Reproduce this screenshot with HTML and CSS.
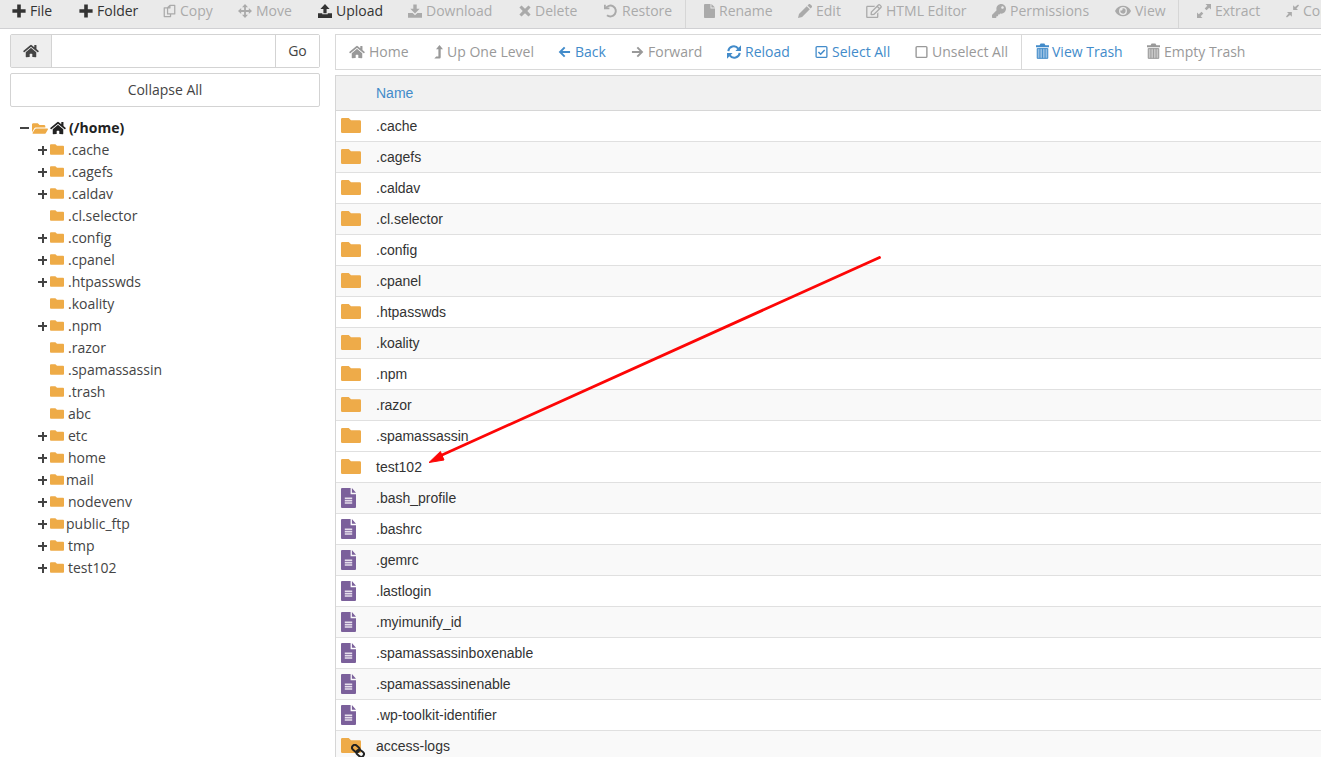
FILE: index.html
```
<!DOCTYPE html>
<html lang="en">
<head>
<meta charset="utf-8">
<title>File Manager</title>
<link rel="stylesheet" href="styles.css">
</head>
<body>
<svg class="sprite" aria-hidden="true">
  <symbol id="home" viewBox="0 0 576 512"><path d="M280.37 148.26L96 300.11V464a16 16 0 0 0 16 16l112.06-.29a16 16 0 0 0 15.92-16V368a16 16 0 0 1 16-16h64a16 16 0 0 1 16 16v95.64a16 16 0 0 0 16 16.05L464 480a16 16 0 0 0 16-16V300L295.67 148.26a12.19 12.19 0 0 0-15.3 0zM571.6 251.47L488 182.56V44.05a12 12 0 0 0-12-12h-56a12 12 0 0 0-12 12v72.61L318.47 43a48 48 0 0 0-61 0L4.34 251.47a12 12 0 0 0-1.6 16.9l25.5 31A12 12 0 0 0 45.15 301l235.22-193.74a12.19 12.19 0 0 1 15.3 0L530.9 301a12 12 0 0 0 16.9-1.6l25.5-31a12 12 0 0 0-1.7-16.93z"/></symbol>
  <symbol id="plus" viewBox="0 0 14 14"><path d="M5.2 .6h3.600v4.600h4.800v3.600H8.800v4.600H5.200V8.800H.4V5.200h4.800z"/></symbol>
  <symbol id="copy" viewBox="0 0 14 16"><g fill="none" stroke="currentColor" stroke-width="1.4" stroke-linejoin="round"><path d="M7.500 1.500H13v9.800H4.800V4.300zM7.500 1.500v3H4.800M4.800 4.300H1v10h7.200v-3"/></g></symbol>
  <symbol id="move" viewBox="0 0 14 14"><path d="M7 0l3 3.200H7.900v2.900h2.900V4L14 7l-3.200 3V7.900H7.900v2.900H10L7 14l-3-3.200h2.100V7.900H3.200V10L0 7l3.200-3v2.100h2.900V3.200H4z"/></symbol>
  <symbol id="upload" viewBox="0 0 14 14"><path d="M7 0l4.600 4.900H8.600v4.300H5.400V4.900H2.400z"/><path d="M0 9.300h4.300v1h5.400v-1H14V14H0z"/></symbol>
  <symbol id="download" viewBox="0 0 14 14"><path d="M5.300.5h3.400v4.300h3L7 9.600 2.300 4.800h3z"/><path d="M0 9h4.600L7 11.200 9.400 9H14v4.800H0z"/></symbol>
  <symbol id="times" viewBox="0 0 12 12"><path d="M2.500.4L6 3.700 9.500.4l2.100 2.200L8.300 6l3.300 3.400-2.100 2.200L6 8.300l-3.500 3.300L.4 9.400 3.700 6 .4 2.600z"/></symbol>
  <symbol id="undo" viewBox="0 0 14 14"><path d="M0 .8h1.800v2.700h3.600v1.800H0z"/><path d="M1.600 4.600A5.400 5.400 0 1 1 3 11.200" fill="none" stroke="currentColor" stroke-width="2"/></symbol>
  <symbol id="file" viewBox="0 0 11 14"><path d="M1 0h5.500v4.500H11v8.700a.8.8 0 0 1-.8.800H.8a.8.800 0 0 1-.8-.8V1a1 1 0 0 1 1-1zM7.400 0L11 3.600H7.400z"/></symbol>
  <symbol id="pencil" viewBox="0 0 14 14"><path d="M8.700 2.200l3.100 3.100L4.100 13 0 14l1-4.100zM9.500 1.400L10.500.4a1.300 1.300 0 0 1 1.900 0l1.200 1.200a1.300 1.300 0 0 1 0 1.900l-1 1z"/></symbol>
  <symbol id="edit" viewBox="0 0 576 512"><path d="M402.3 344.9l32-32c5-5 13.7-1.5 13.7 5.7V464c0 26.5-21.5 48-48 48H48c-26.5 0-48-21.5-48-48V112c0-26.5 21.5-48 48-48h273.5c7.1 0 10.7 8.6 5.700 13.700l-32 32c-1.5 1.500-3.500 2.300-5.700 2.300H48v352h352V350.500c0-2.100.8-4.100 2.300-5.600zm156.600-201.800L296.300 405.700l-90.400 10c-26.200 2.900-48.500-19.200-45.600-45.600l10-90.400L432.900 17.100c22.900-22.900 59.900-22.900 82.700 0l43.200 43.200c22.900 22.900 22.900 60 .1 82.800zM460.100 174L402 115.900 216.200 301.800l-7.300 65.300 65.300-7.300L460.100 174zm64.800-79.700l-43.200-43.200c-4.100-4.100-10.800-4.100-14.800 0L436 82l58.100 58.100 30.900-30.900c4-4.200 4-10.800-.1-14.900z"/></symbol>
  <symbol id="key" viewBox="0 0 512 512"><path d="M512 176C512 273.200 433.200 352 336 352c-11.220 0-22.190-1.060-32.830-3.070l-24 27A24 24 0 0 1 261.220 384H224v40c0 13.250-10.750 24-24 24h-40v40c0 13.250-10.750 24-24 24H24c-13.250 0-24-10.750-24-24v-78.060c0-6.360 2.530-12.470 7.030-16.970l161.800-161.800C163.100 213.800 160 195.270 160 176 160 78.800 238.800 0 336 0 433.500 0 512 78.500 512 176zM336 128c0 26.510 21.490 48 48 48s48-21.490 48-48-21.490-48-48-48-48 21.490-48 48z"/></symbol>
  <symbol id="eye" viewBox="0 0 576 512"><path d="M572.520 241.400C518.290 135.590 410.930 64 288 64S57.680 135.640 3.480 241.410a32.350 32.350 0 0 0 0 29.190C57.710 376.410 165.070 448 288 448s230.320-71.640 284.520-177.410a32.350 32.350 0 0 0 0-29.190zM288 400a144 144 0 1 1 144-144 143.930 143.930 0 0 1-144 144zm0-240a95.310 95.310 0 0 0-25.310 3.790 47.850 47.850 0 0 1-66.900 66.900A95.780 95.780 0 1 0 288 160z"/></symbol>
  <symbol id="expand" viewBox="0 0 14 14"><path d="M8.500 0H14v5.500l-1.800-1.800-2.700 2.600-1.800-1.800 2.600-2.700zM5.500 14H0V8.500l1.800 1.800 2.700-2.600 1.800 1.800-2.600 2.700z"/></symbol>
  <symbol id="compress" viewBox="0 0 14 14"><path d="M13 0l1 1-2.800 3.200L13 6H7.700V.8l1.900 1.900zM1 14l-1-1 2.800-3.200L1 8h5.300v5.200l-1.900-1.900z"/></symbol>
  <symbol id="levelup" viewBox="0 0 9 14"><path d="M5.500 0L9 4.300H6.700v8a1.200 1.200 0 0 1-1.200 1.200H.3L2.200 11.400h2.200V4.300H2z"/></symbol>
  <symbol id="left" viewBox="0 0 14 14"><path d="M7.200 2L2.200 7l5 5M2.400 7H13" fill="none" stroke="currentColor" stroke-width="2.100"/></symbol>
  <symbol id="right" viewBox="0 0 14 14"><path d="M6.800 2l5 5-5 5M11.600 7H1" fill="none" stroke="currentColor" stroke-width="2.100"/></symbol>
  <symbol id="sync" viewBox="0 0 14 14"><path d="M1.300 6.200A5.500 5.500 0 0 1 11.200 3.600M12.700 7.800A5.500 5.500 0 0 1 2.800 10.400" fill="none" stroke="currentColor" stroke-width="2"/><path d="M14 .3v5.600H8.400zM0 13.700V8.100h5.600z"/></symbol>
  <symbol id="checked" viewBox="0 0 14 14"><g fill="none" stroke="currentColor"><rect x="1.200" y="1.200" width="11.600" height="11.600" rx="1" stroke-width="1.400"/><path d="M3.700 7l2.400 2.400 4.300-4.500" stroke-width="1.700"/></g></symbol>
  <symbol id="unchecked" viewBox="0 0 14 14"><rect x="1.200" y="1.200" width="11.600" height="11.600" rx="1" fill="none" stroke="currentColor" stroke-width="1.500"/></symbol>
  <symbol id="trash" viewBox="0 0 13 16"><path d="M0 2.200h3.600L4.600.4h3.800l1 1.800H13v2H0z"/><path d="M.8 5.200h11.400v9.700a.9.900 0 0 1-.9.900H1.700a.9.900 0 0 1-.9-.9z" opacity=".55"/><path d="M1.300 5.600v9.700h10.400V5.600zM3.900 5.600v9.700M6.500 5.600v9.700M9.100 5.600v9.700" fill="none" stroke="currentColor" stroke-width=".9"/></symbol>
  <symbol id="folder" viewBox="0 0 20 15"><path d="M1.300 0h6.400l2.300 2.200h8.700A1.300 1.300 0 0 1 20 3.500v10.200a1.300 1.300 0 0 1-1.300 1.300H1.300A1.300 1.300 0 0 1 0 13.700V1.300A1.300 1.300 0 0 1 1.300 0z"/></symbol>
  <symbol id="folderopen" viewBox="0 64 576 384"><path d="M572.700 292.100L500.270 416.250A64 64 0 0 1 445 448H45c-18.500 0-30-20.100-20.700-36.100l72.400-124.150A64 64 0 0 1 152 256h400c18.500 0 30 20.100 20.700 36.100zM152 224h328v-48c0-26.500-21.500-48-48-48H272l-64-64H48C21.500 64 0 85.500 0 112v278l69-118.400C86.200 242.250 118 224 152 224z"/></symbol>
  <symbol id="doc" viewBox="0 0 15 20"><path d="M1 0h8.600v6.200H15V19a1 1 0 0 1-1 1H1a1 1 0 0 1-1-1V1a1 1 0 0 1 1-1zM10.900 0L15 4.700h-4.100z"/><path d="M3.800 10.200h7.400M3.800 12.600h7.400M3.800 15h7.400" stroke="#e6deec" stroke-width="1.600"/></symbol>
  <symbol id="link" viewBox="0 0 14 14"><g fill="none" stroke="currentColor" stroke-width="2"><rect x="0.800" y="1.800" width="8" height="5.400" rx="2.700" transform="rotate(40 4.800 4.500)"/><rect x="5.200" y="6.600" width="8" height="5.400" rx="2.700" transform="rotate(40 9.200 9.300)"/></g></symbol>
</svg>

<nav class="toolbar">
  <a class="tool on"><svg class="i14"><use href="#plus"/></svg><span>File</span></a>
  <a class="tool on"><svg class="i14"><use href="#plus"/></svg><span>Folder</span></a>
  <a class="tool"><svg class="i13"><use href="#copy"/></svg><span>Copy</span></a>
  <a class="tool"><svg class="i14"><use href="#move"/></svg><span>Move</span></a>
  <a class="tool on"><svg class="i14"><use href="#upload"/></svg><span>Upload</span></a>
  <a class="tool"><svg class="i14"><use href="#download"/></svg><span>Download</span></a>
  <a class="tool"><svg class="i12"><use href="#times"/></svg><span>Delete</span></a>
  <a class="tool"><svg class="i14"><use href="#undo"/></svg><span>Restore</span></a>
  <a class="tool split"><svg class="i11"><use href="#file"/></svg><span>Rename</span></a>
  <a class="tool"><svg class="i14"><use href="#pencil"/></svg><span>Edit</span></a>
  <a class="tool"><svg class="i16"><use href="#edit"/></svg><span>HTML Editor</span></a>
  <a class="tool"><svg class="i14"><use href="#key"/></svg><span>Permissions</span></a>
  <a class="tool"><svg class="i16"><use href="#eye"/></svg><span>View</span></a>
  <a class="tool split"><svg class="i14"><use href="#expand"/></svg><span>Extract</span></a>
  <a class="tool"><svg class="i13"><use href="#compress"/></svg><span>Compress</span></a>
</nav>

<div class="page">
  <aside class="side">
    <div class="path"><span class="path-home"><svg class="i16"><use href="#home"/></svg></span><input class="path-input" aria-label="Path"><button class="path-go">Go</button></div>
    <button class="collapse">Collapse All</button>
    <div class="tree">
      <div class="root"><b class="minus"></b><svg class="open"><use href="#folderopen"/></svg><svg class="i16"><use href="#home"/></svg><span>(/home)</span></div>
      <div class="node"><b class="more"></b><svg><use href="#folder"/></svg><span>.cache</span></div>
      <div class="node"><b class="more"></b><svg><use href="#folder"/></svg><span>.cagefs</span></div>
      <div class="node"><b class="more"></b><svg><use href="#folder"/></svg><span>.caldav</span></div>
      <div class="node"><b></b><svg><use href="#folder"/></svg><span>.cl.selector</span></div>
      <div class="node"><b class="more"></b><svg><use href="#folder"/></svg><span>.config</span></div>
      <div class="node"><b class="more"></b><svg><use href="#folder"/></svg><span>.cpanel</span></div>
      <div class="node"><b class="more"></b><svg><use href="#folder"/></svg><span>.htpasswds</span></div>
      <div class="node"><b></b><svg><use href="#folder"/></svg><span>.koality</span></div>
      <div class="node"><b class="more"></b><svg><use href="#folder"/></svg><span>.npm</span></div>
      <div class="node"><b></b><svg><use href="#folder"/></svg><span>.razor</span></div>
      <div class="node"><b></b><svg><use href="#folder"/></svg><span>.spamassassin</span></div>
      <div class="node"><b></b><svg><use href="#folder"/></svg><span>.trash</span></div>
      <div class="node"><b></b><svg><use href="#folder"/></svg><span>abc</span></div>
      <div class="node"><b class="more"></b><svg><use href="#folder"/></svg><span>etc</span></div>
      <div class="node"><b class="more"></b><svg><use href="#folder"/></svg><span>home</span></div>
      <div class="node tight"><b class="more"></b><svg><use href="#folder"/></svg><span>mail</span></div>
      <div class="node"><b class="more"></b><svg><use href="#folder"/></svg><span>nodevenv</span></div>
      <div class="node tight"><b class="more"></b><svg><use href="#folder"/></svg><span>public_ftp</span></div>
      <div class="node"><b class="more"></b><svg><use href="#folder"/></svg><span>tmp</span></div>
      <div class="node"><b class="more"></b><svg><use href="#folder"/></svg><span>test102</span></div>
    </div>
  </aside>

  <main class="main">
    <nav class="actions">
      <a class="act"><svg class="i16"><use href="#home"/></svg><span>Home</span></a>
      <a class="act"><svg class="i9"><use href="#levelup"/></svg><span>Up One Level</span></a>
      <a class="act blue"><svg class="i13"><use href="#left"/></svg><span>Back</span></a>
      <a class="act"><svg class="i13"><use href="#right"/></svg><span>Forward</span></a>
      <a class="act blue"><svg class="i14"><use href="#sync"/></svg><span>Reload</span></a>
      <a class="act blue"><svg class="i13"><use href="#checked"/></svg><span>Select All</span></a>
      <a class="act"><svg class="i13"><use href="#unchecked"/></svg><span>Unselect All</span></a>
      <a class="act blue split"><svg class="bin"><use href="#trash"/></svg><span>View Trash</span></a>
      <a class="act"><svg class="bin"><use href="#trash"/></svg><span>Empty Trash</span></a>
    </nav>
    <div class="list">
      <div class="head">Name</div>
      <div class="row"><svg class="dir"><use href="#folder"/></svg><span>.cache</span></div>
      <div class="row alt"><svg class="dir"><use href="#folder"/></svg><span>.cagefs</span></div>
      <div class="row"><svg class="dir"><use href="#folder"/></svg><span>.caldav</span></div>
      <div class="row alt"><svg class="dir"><use href="#folder"/></svg><span>.cl.selector</span></div>
      <div class="row"><svg class="dir"><use href="#folder"/></svg><span>.config</span></div>
      <div class="row alt"><svg class="dir"><use href="#folder"/></svg><span>.cpanel</span></div>
      <div class="row"><svg class="dir"><use href="#folder"/></svg><span>.htpasswds</span></div>
      <div class="row alt"><svg class="dir"><use href="#folder"/></svg><span>.koality</span></div>
      <div class="row"><svg class="dir"><use href="#folder"/></svg><span>.npm</span></div>
      <div class="row alt"><svg class="dir"><use href="#folder"/></svg><span>.razor</span></div>
      <div class="row"><svg class="dir"><use href="#folder"/></svg><span>.spamassassin</span></div>
      <div class="row"><svg class="dir"><use href="#folder"/></svg><span>test102</span></div>
      <div class="row alt"><svg class="doc"><use href="#doc"/></svg><span>.bash_profile</span></div>
      <div class="row"><svg class="doc"><use href="#doc"/></svg><span>.bashrc</span></div>
      <div class="row alt"><svg class="doc"><use href="#doc"/></svg><span>.gemrc</span></div>
      <div class="row"><svg class="doc"><use href="#doc"/></svg><span>.lastlogin</span></div>
      <div class="row alt"><svg class="doc"><use href="#doc"/></svg><span>.myimunify_id</span></div>
      <div class="row"><svg class="doc"><use href="#doc"/></svg><span>.spamassassinboxenable</span></div>
      <div class="row alt"><svg class="doc"><use href="#doc"/></svg><span>.spamassassinenable</span></div>
      <div class="row"><svg class="doc"><use href="#doc"/></svg><span>.wp-toolkit-identifier</span></div>
      <div class="row alt"><svg class="dir"><use href="#folder"/></svg><svg class="badge"><use href="#link"/></svg><span>access-logs</span></div>
    </div>
  </main>
</div>
<svg class="arrow" viewBox="0 0 460 212"><path d="M451.500 5.500L14 203" stroke="#fd0606" stroke-width="2.800" stroke-linecap="round"/><path d="M1 210.500L12.400 199.500 16 208z" fill="#fd0606" stroke="#fd0606"/></svg>
</body>
</html>
```
FILE: styles.css
```
* { box-sizing: border-box; }
html { overflow: hidden; }
body {
  margin: 0;
  height: 757px;
  overflow: hidden;
  position: relative;
  background: #fff;
  color: #444;
  font: 14px/22px "Open Sans", sans-serif;
}
svg { fill: currentColor; flex: none; display: block; }
.sprite { position: absolute; width: 0; height: 0; }
.i9 { width: 9px; height: 14px; }
.i11 { width: 11px; height: 14px; }
.i12 { width: 12px; height: 14px; }
.i13 { width: 13px; height: 14px; }
.i14 { width: 14px; height: 14px; }
.i16 { width: 16px; height: 14px; }
.bin { width: 13px; height: 16px; margin-bottom: 2px; }

.toolbar {
  display: grid;
  grid-template-columns: 67px 84px 75px 80px 90px 111px 85px 93px 101px 68px 126px 123px 75px 96px minmax(0, 1fr);
  height: 29px;
  background: #eaeaea;
  border-bottom: 1px solid #d0d0d3;
}
.tool {
  display: flex;
  align-items: center;
  gap: 4px;
  min-width: 0;
  overflow: hidden;
  padding: 0 0 6px 12px;
  color: #aaa;
  white-space: nowrap;
}
.tool.on { color: #333; }
.tool.split { border-left: 1px solid #d6d6d6; padding-left: 18px; }

.page { display: flex; padding-top: 5px; }
.side { width: 320px; padding-left: 10px; flex: none; }
.path {
  display: grid;
  grid-template-columns: 41px 1fr 44px;
  height: 34px;
  border: 1px solid #d3d3d3;
  border-radius: 2px;
}
.path-home { display: grid; place-items: center; background: #eee; border-right: 1px solid #d3d3d3; }
.path-input { min-width: 0; border: 0; background: #fff; }
.path-go { border: 0; border-left: 1px solid #d3d3d3; background: #fff; font: inherit; color: inherit; padding: 0; }
.collapse {
  display: block;
  width: 100%;
  height: 34px;
  margin-top: 5px;
  border: 1px solid #d3d3d3;
  border-radius: 2px;
  background: #fff;
  font: inherit;
  color: inherit;
}
.tree { padding-top: 10px; }
.root { display: flex; align-items: center; height: 22px; padding-left: 10px; color: #222; font-weight: 700; }
.minus { width: 9px; height: 2px; background: #444; margin-right: 3px; }
.open { width: 16px; height: 11px; color: #eeab47; margin-right: 2px; }
.root span { margin-left: 3px; }
.node { display: flex; align-items: center; height: 22px; padding-left: 28px; }
.node b { width: 9px; height: 9px; margin-right: 3px; }
.node .more { background: linear-gradient(#444, #444) center / 9px 2px no-repeat, linear-gradient(#444, #444) center / 2px 9px no-repeat; }
.node svg { width: 14px; height: 11px; color: #eeab47; margin: 0 4px 1px 0; }
.node.tight svg { margin-right: 2px; }

.main { flex: 1; min-width: 0; margin-left: 15px; }
.actions {
  display: grid;
  grid-template-columns: 85px 124px 73px 96px 88px 100px 119px 113px 120px;
  height: 36px;
  border: 1px solid #d9d9d9;
  border-right: 0;
}
.act {
  display: flex;
  align-items: center;
  gap: 4px;
  padding-left: 13px;
  color: #999;
  white-space: nowrap;
}
.act.blue { color: #428bca; }
.act.split { border-left: 1px solid #d9d9d9; padding-left: 14px; gap: 3px; }

.list { margin-top: 5px; border: 1px solid #d6d6d6; border-right: 0; font-family: "Liberation Sans", sans-serif; color: #333; }
.head { height: 35px; line-height: 34px; padding-left: 40px; background: #f1f1f1; border-bottom: 1px solid #d6d6d6; color: #428bca; }
.row { position: relative; display: flex; align-items: center; height: 31px; padding-left: 5px; border-bottom: 1px solid #e0e0e0; }
.alt { background: #f9f9f9; }
.dir { width: 20px; height: 15px; color: #eeab49; margin: 0 15px 1px 0; }
.doc { width: 15px; height: 20px; color: #7b609b; margin: 0 20px 1px 0; }
.badge { position: absolute; left: 15px; top: 13px; width: 14px; height: 14px; color: #222; }
.arrow { position: absolute; left: 428px; top: 252px; width: 460px; height: 212px; fill: none; }
```
